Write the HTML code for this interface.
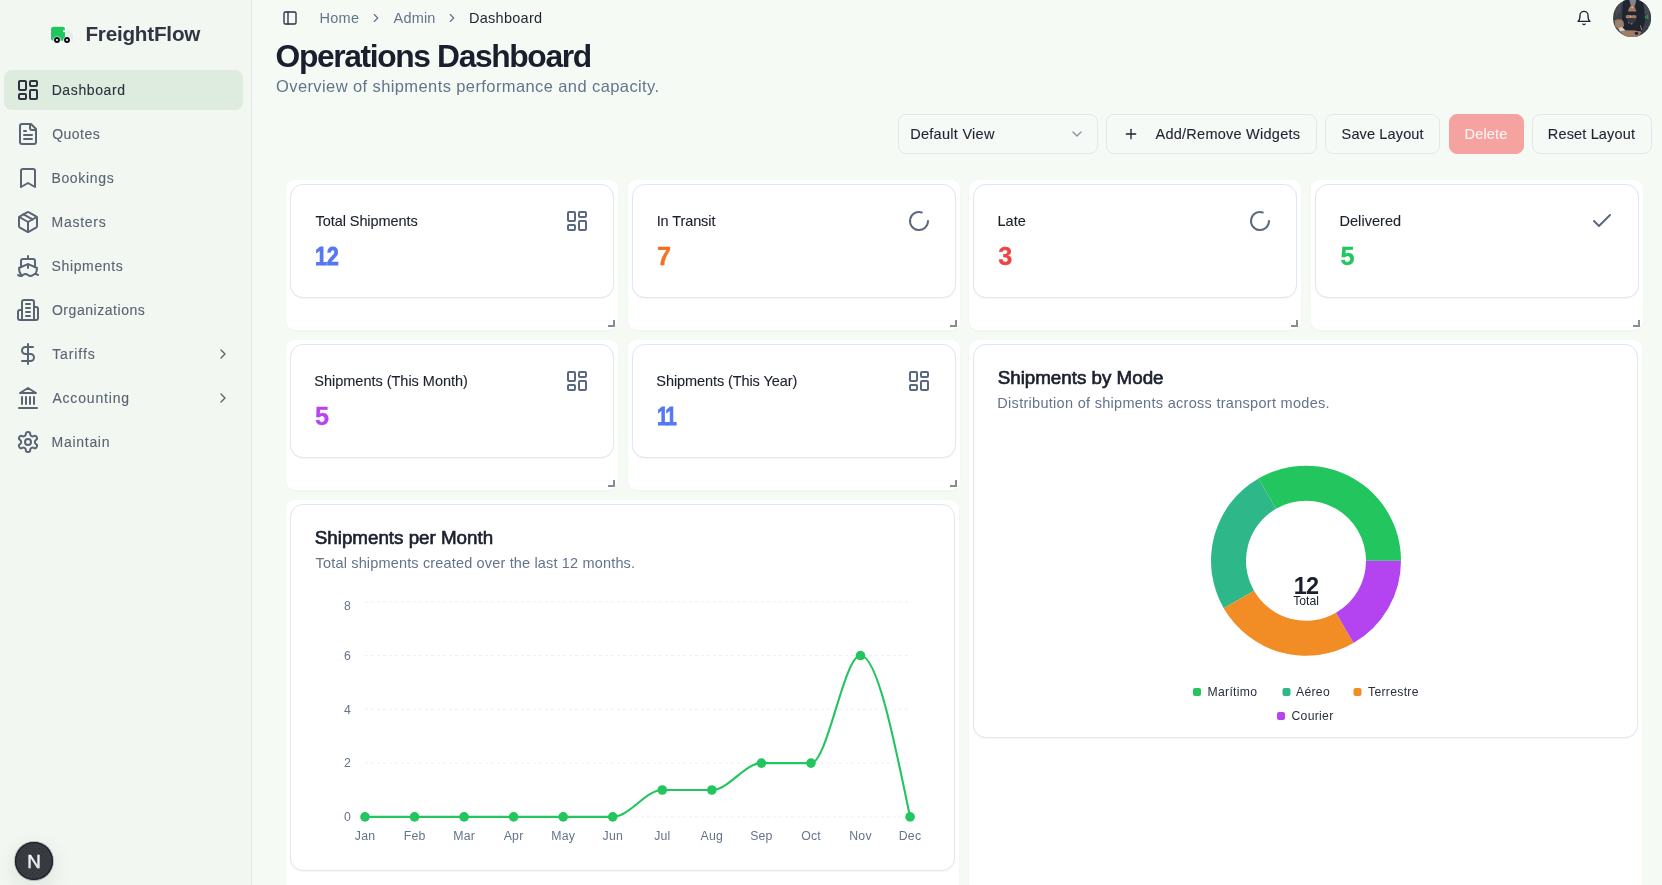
<!DOCTYPE html>
<html lang="en">
<head>
<meta charset="utf-8">
<title>FreightFlow - Operations Dashboard</title>
<style>
*{box-sizing:border-box;margin:0;padding:0}
html,body{width:1662px;height:885px;overflow:hidden}
body{background:#f5faf5;font-family:"Liberation Sans",sans-serif;color:#1a202c;position:relative;font-size:14px}
svg{display:block}
.abs{position:absolute}
#sidebar,#main{will-change:transform}
#main{position:absolute;left:0;top:0;width:1662px;height:885px}
.ico{fill:none;stroke:currentColor;stroke-width:2;stroke-linecap:round;stroke-linejoin:round}
/* sidebar */
#sidebar{position:absolute;left:0;top:0;width:252px;height:885px;background:#f2f7f2;border-right:1px solid #e3e7f0;z-index:2}
#brand{position:absolute;left:86px;top:21px;font-size:20.7px;font-weight:700;color:#2f3642;line-height:26px;white-space:nowrap;letter-spacing:0.1px}
.nav{position:absolute;left:4px;width:239px;height:40px;border-radius:8px;color:#5b6472}
.nav.active{background:#ddecdf;color:#2c333f}
.nav svg.ni{position:absolute;left:12px;top:8px;width:24px;height:24px}
.nav span{position:absolute;left:48.5px;top:0;line-height:40px;font-size:14px;white-space:nowrap;letter-spacing:0.5px;-webkit-text-stroke:0.12px currentColor}
.nav svg.chev{position:absolute;left:211px;top:12px;width:16px;height:16px}
/* header */
.crumb{position:absolute;top:8px;line-height:20px;font-size:14.5px;color:#64748b;white-space:nowrap;letter-spacing:0.3px}
#title{position:absolute;left:275px;top:38px;font-size:31.8px;line-height:36px;font-weight:700;color:#1a1f2e;white-space:nowrap;letter-spacing:-1.4px}
#subtitle{position:absolute;left:276px;top:74px;font-size:16.5px;line-height:24px;color:#64748b;white-space:nowrap;letter-spacing:0.4px}
/* toolbar */
.btn{position:absolute;top:114px;height:40px;border:1px solid #e2e6ef;border-radius:8px;background:#f6faf6;color:#1f2430;font-size:14.5px;line-height:38px;white-space:nowrap;letter-spacing:0.35px;-webkit-text-stroke:0.12px currentColor}
.btn span{position:absolute;top:0}
#m1{letter-spacing:-0.30px;margin-left:0.90px;transform:scaleX(.86);transform-origin:0 0;-webkit-text-stroke:0.8px currentColor}
#m6{letter-spacing:-2.60px;margin-left:1.00px;transform:scaleX(.82);transform-origin:0 0;-webkit-text-stroke:0.8px currentColor}
#m2{letter-spacing:0.00px;margin-left:0.92px}
#m3{letter-spacing:0.00px;margin-left:1.32px}
#m4{letter-spacing:0.00px;margin-left:1.40px}
#m5{letter-spacing:0.00px;margin-left:1.12px}
/* grid */
.cell{position:absolute;background:#fff;border-radius:9px;box-shadow:0 1px 2px rgba(30,50,30,.035)}
.cell:after{content:"";position:absolute;right:3px;bottom:3.5px;width:5.5px;height:5px;border-right:2px solid rgba(40,44,52,.55);border-bottom:2px solid rgba(40,44,52,.55)}
.card{position:absolute;left:4px;top:4px;right:4px;border:1px solid #e1e6ef;border-radius:13px;background:#fff;box-shadow:0 1px 2px rgba(15,23,42,.045)}
.stat .lbl{position:absolute;left:24px;top:26px;font-size:14.5px;line-height:20px;color:#1c212c;white-space:nowrap;letter-spacing:0.1px;-webkit-text-stroke:0.12px currentColor}
.stat .num{position:absolute;left:23px;top:55px;font-size:25.3px;line-height:32px;font-weight:700;white-space:nowrap;-webkit-text-stroke:0.3px currentColor}
.stat svg.si{position:absolute;right:24px;top:24px;width:24px;height:24px;color:#5b6980}
.ctitle{position:absolute;left:24px;top:22px;font-size:18.8px;line-height:24px;font-weight:400;-webkit-text-stroke:0.65px currentColor;color:#1a1f2e;white-space:nowrap;letter-spacing:-0.1px}
.csub{position:absolute;left:24px;top:49px;font-size:14.5px;line-height:20px;color:#64748b;white-space:nowrap;letter-spacing:0.4px}
</style>
<style id="fit">
#n1{letter-spacing:0.62px;margin-left:-0.89px}
#n2{letter-spacing:0.51px;margin-left:-0.39px}
#n3{letter-spacing:0.67px;margin-left:-1.14px}
#n4{letter-spacing:0.73px;margin-left:-0.93px}
#n5{letter-spacing:0.62px;margin-left:-0.91px}
#n6{letter-spacing:0.54px;margin-left:-0.59px}
#n7{letter-spacing:0.89px;margin-left:-0.28px}
#n8{letter-spacing:0.82px;margin-left:-0.11px}
#n9{letter-spacing:0.71px;margin-left:-0.92px}
#brand{letter-spacing:-0.22px;margin-left:-0.62px}
#c1{letter-spacing:0.31px;margin-left:-0.62px}
#c2{letter-spacing:0.18px;margin-left:0.04px}
#c3{letter-spacing:0.28px;margin-left:-0.56px}
#title{letter-spacing:-1.38px;margin-left:0.59px}
#subtitle{letter-spacing:0.40px;margin-left:0.00px}
#b0{letter-spacing:0.28px;margin-left:-0.84px}
#b1{letter-spacing:0.25px;margin-left:0.53px}
#b2{letter-spacing:0.14px;margin-left:-0.42px}
#b3{letter-spacing:0.16px;margin-left:-0.45px}
#b4{letter-spacing:0.15px;margin-left:-1.18px}
#s1{letter-spacing:-0.08px;margin-left:0.62px}
#s2{letter-spacing:-0.10px;margin-left:-0.34px}
#s3{letter-spacing:0.08px;margin-left:-0.54px}
#s4{letter-spacing:0.05px;margin-left:-0.54px}
#s5{letter-spacing:-0.02px;margin-left:-0.65px}
#s6{letter-spacing:-0.09px;margin-left:-0.65px}
#pt{letter-spacing:-0.01px;margin-left:0.69px}
#ps{letter-spacing:0.29px;margin-left:0.32px}
#lt{letter-spacing:-0.01px;margin-left:0.79px}
#ls{letter-spacing:0.16px;margin-left:1.62px}
</style>
</head>
<body>
<!-- SIDEBAR -->
<div id="sidebar">
  <svg class="abs" style="left:48px;top:20px" width="28" height="28" viewBox="48 20 28 28">
    <rect x="50" y="25.8" width="16" height="16" rx="3" fill="#fafdfb"/>
    <path d="M65 30h4.2l4 5v6.2H65z" fill="#e8edea"/>
    <rect x="51" y="26.8" width="14" height="14" rx="2.4" fill="#22c55e"/>
    <rect x="63.2" y="30.2" width="2.4" height="1.9" fill="#fafdfb"/>
    <circle cx="57" cy="40" r="3.6" fill="#fafdfb"/><circle cx="67" cy="40" r="3.6" fill="#fafdfb"/>
    <circle cx="57" cy="40" r="2" fill="#fff" stroke="#0b0a17" stroke-width="1.9"/>
    <circle cx="67" cy="40" r="2" fill="#fff" stroke="#0b0a17" stroke-width="1.9"/>
  </svg>
  <div id="brand">FreightFlow</div>
  <div class="nav active" style="top:70px"><svg class="ni ico" viewBox="0 0 24 24"><rect width="7" height="9" x="3" y="3" rx="1"/><rect width="7" height="5" x="14" y="3" rx="1"/><rect width="7" height="9" x="14" y="12" rx="1"/><rect width="7" height="5" x="3" y="16" rx="1"/></svg><span id="n1">Dashboard</span></div>
  <div class="nav" style="top:114px"><svg class="ni ico" viewBox="0 0 24 24"><path d="M15 2H6a2 2 0 0 0-2 2v16a2 2 0 0 0 2 2h12a2 2 0 0 0 2-2V7Z"/><path d="M14 2v4a2 2 0 0 0 2 2h4"/><path d="M10 9H8"/><path d="M16 13H8"/><path d="M16 17H8"/></svg><span id="n2">Quotes</span></div>
  <div class="nav" style="top:158px"><svg class="ni ico" viewBox="0 0 24 24"><path d="m19 21-7-4-7 4V5a2 2 0 0 1 2-2h10a2 2 0 0 1 2 2v16z"/></svg><span id="n3">Bookings</span></div>
  <div class="nav" style="top:202px"><svg class="ni ico" viewBox="0 0 24 24"><path d="m7.5 4.27 9 5.15"/><path d="M21 8a2 2 0 0 0-1-1.730l-7-4a2 2 0 0 0-2 0l-7 4A2 2 0 0 0 3 8v8a2 2 0 0 0 1 1.730l7 4a2 2 0 0 0 2 0l7-4A2 2 0 0 0 21 16Z"/><path d="m3.300 7 8.700 5 8.700-5"/><path d="M12 22V12"/></svg><span id="n4">Masters</span></div>
  <div class="nav" style="top:246px"><svg class="ni ico" viewBox="0 0 24 24"><path d="M12 10.189V14"/><path d="M12 2v3"/><path d="M19 13V7a2 2 0 0 0-2-2H7a2 2 0 0 0-2 2v6"/><path d="M19.380 20A11.600 11.600 0 0 0 21 14l-8.188-3.639a2 2 0 0 0-1.624 0L3 14a11.600 11.600 0 0 0 2.810 7.760"/><path d="M2 21c.6.500 1.200 1 2.500 1 2.500 0 2.500-2 5-2 1.300 0 1.900.500 2.500 1s1.200 1 2.500 1c2.500 0 2.500-2 5-2 1.300 0 1.900.500 2.500 1"/></svg><span id="n5">Shipments</span></div>
  <div class="nav" style="top:290px"><svg class="ni ico" viewBox="0 0 24 24"><path d="M6 22V4a2 2 0 0 1 2-2h8a2 2 0 0 1 2 2v18Z"/><path d="M6 12H4a2 2 0 0 0-2 2v6a2 2 0 0 0 2 2h2"/><path d="M18 9h2a2 2 0 0 1 2 2v9a2 2 0 0 1-2 2h-2"/><path d="M10 6h4"/><path d="M10 10h4"/><path d="M10 14h4"/><path d="M10 18h4"/></svg><span id="n6">Organizations</span></div>
  <div class="nav" style="top:334px"><svg class="ni ico" viewBox="0 0 24 24"><line x1="12" x2="12" y1="2" y2="22"/><path d="M17 5H9.500a3.500 3.500 0 0 0 0 7h5a3.500 3.500 0 0 1 0 7H6"/></svg><span id="n7">Tariffs</span><svg class="chev ico" viewBox="0 0 24 24"><path d="m9 18 6-6-6-6"/></svg></div>
  <div class="nav" style="top:378px"><svg class="ni ico" viewBox="0 0 24 24"><line x1="3" x2="21" y1="22" y2="22"/><line x1="6" x2="6" y1="18" y2="11"/><line x1="10" x2="10" y1="18" y2="11"/><line x1="14" x2="14" y1="18" y2="11"/><line x1="18" x2="18" y1="18" y2="11"/><polygon points="12 2 20 7 4 7"/></svg><span id="n8">Accounting</span><svg class="chev ico" viewBox="0 0 24 24"><path d="m9 18 6-6-6-6"/></svg></div>
  <div class="nav" style="top:422px"><svg class="ni ico" viewBox="0 0 24 24"><path d="M12.220 2h-.44a2 2 0 0 0-2 2v.180a2 2 0 0 1-1 1.730l-.43.250a2 2 0 0 1-2 0l-.15-.080a2 2 0 0 0-2.730.730l-.22.380a2 2 0 0 0 .73 2.730l.15.100a2 2 0 0 1 1 1.720v.510a2 2 0 0 1-1 1.740l-.15.090a2 2 0 0 0-.73 2.730l.22.380a2 2 0 0 0 2.730.730l.15-.080a2 2 0 0 1 2 0l.43.250a2 2 0 0 1 1 1.730V20a2 2 0 0 0 2 2h.44a2 2 0 0 0 2-2v-.180a2 2 0 0 1 1-1.730l.43-.250a2 2 0 0 1 2 0l.15.080a2 2 0 0 0 2.730-.730l.22-.39a2 2 0 0 0-.73-2.730l-.15-.080a2 2 0 0 1-1-1.740v-.500a2 2 0 0 1 1-1.740l.15-.090a2 2 0 0 0 .73-2.730l-.22-.380a2 2 0 0 0-2.730-.730l-.15.080a2 2 0 0 1-2 0l-.43-.250a2 2 0 0 1-1-1.730V4a2 2 0 0 0-2-2z"/><circle cx="12" cy="12" r="3"/></svg><span id="n9">Maintain</span></div>
  <!-- next dev badge -->
  <div class="abs" style="left:15px;top:842px;width:38px;height:38px;border-radius:50%;background:#3b3e44;box-shadow:0 0 0 1.2px #202227 inset,0 0 0 1px rgba(125,130,140,.5),0 6px 22px rgba(20,30,20,.10);overflow:hidden">
    <div class="abs" style="left:0;top:0;width:38px;height:38px;background-image:radial-gradient(circle,#25272c 0.6px,transparent 1px),radial-gradient(circle,#25272c 0.6px,transparent 1px);background-size:4.4px 4.4px;background-position:0 0,2.2px 2.2px;opacity:.8"></div>
    <svg class="abs" style="left:0;top:0" width="38" height="38" viewBox="0 0 38 38"><defs><linearGradient id="ng" x1="0" y1="0" x2="0" y2="1"><stop offset="0" stop-color="#fff"/><stop offset=".55" stop-color="#fff" stop-opacity=".9"/><stop offset="1" stop-color="#fff" stop-opacity=".75"/></linearGradient></defs><text x="19" y="25.800" text-anchor="middle" font-size="18.800" fill="url(#ng)" stroke="#fff" stroke-width=".45" stroke-opacity=".9">N</text></svg>
  </div>
</div>
<!-- MAIN placeholder -->
<div id="main">
  <svg class="abs ico" style="left:282px;top:10px;width:16px;height:16px;color:#2a3140" viewBox="0 0 24 24"><rect width="18" height="18" x="3" y="3" rx="2"/><path d="M9 3v18"/></svg>
  <div class="crumb" id="c1" style="left:320px">Home</div>
  <svg class="abs ico" style="left:369px;top:11px;width:14px;height:14px;color:#64748b" viewBox="0 0 24 24"><path d="m9 18 6-6-6-6"/></svg>
  <div class="crumb" id="c2" style="left:393.5px">Admin</div>
  <svg class="abs ico" style="left:445px;top:11px;width:14px;height:14px;color:#64748b" viewBox="0 0 24 24"><path d="m9 18 6-6-6-6"/></svg>
  <div class="crumb" id="c3" style="left:469.5px;color:#1e2430">Dashboard</div>
  <!-- bell -->
  <svg class="abs ico" style="left:1576px;top:10px;width:16px;height:16px;color:#1d2330" viewBox="0 0 24 24"><path d="M6 8a6 6 0 0 1 12 0c0 7 3 9 3 9H3s3-2 3-9"/><path d="M10.300 21a1.940 1.940 0 0 0 3.400 0"/></svg>
  <!-- avatar -->
  <svg class="abs" style="left:1612.9px;top:-1.4px" width="38.2" height="38.2" viewBox="0 0 38.2 38.2">
    <defs><clipPath id="av"><circle cx="19.1" cy="19.1" r="19.1"/></clipPath></defs>
    <g clip-path="url(#av)">
      <rect width="38.2" height="38.2" fill="#3a4048"/>
      <path d="M2 8l6-6v10l-5 6zM31 2l5 7v12l-4-2z" fill="#454b53"/>
      <path d="M10 0h19.500l1.500 9 1.200 13-3.500 10.600H9.500L9 21z" fill="#1e2430"/>
      <path d="M16 0h7.500l-1.500 6.500-2.500 2-2-3z" fill="#7d858f"/>
      <path d="M19.300 4l1.600 2 1.200 3 1.400 3.600h-8.600l1-3.400 1.600-2.200z" fill="#a07c62"/>
      <circle cx="19.300" cy="8.200" r="1" fill="#f0a0a6"/>
      <path d="M12.800 16.400l3.400-.6 1.400 1 3-.8 2.800.6v2.600l-2 .4-3.600-.6-3.200.8-1.800-1z" fill="#a07c62"/>
      <rect x="17.100" y="16.300" width="1.100" height="2.200" fill="#f0a0a6"/>
      <path d="M13.800 19.800l4.600-.8 5 .8-1.600 4-3 1.600-3.200-1.200z" fill="#333a43"/>
      <rect x="15" y="23.300" width="1.200" height="1" fill="#a07c62"/><rect x="17.500" y="24.300" width="2" height="1" fill="#a07c62"/>
      <path d="M1.600 21.600l3-1.400 4 .2 2 2.400.4 4-1.600 2.400-4.600.6-2.600-2.800z" fill="#a07c62"/>
      <g fill="#8d98a4"><circle cx="4.500" cy="24.200" r=".5"/><circle cx="6.400" cy="23.200" r=".5"/><circle cx="7.500" cy="24.400" r=".5"/><circle cx="5.400" cy="26.200" r=".5"/></g>
      <path d="M5.200 28.800l4-.6 3.200 3-1.200 1.800-4.400-.6z" fill="#cfd3d6"/>
      <rect x="7" y="29" width="1.200" height="2.600" fill="#f2c4b0"/>
      <path d="M7 32.600l5.500-1.400 9.500.4 6.500 1.200-3 5.400H12z" fill="#a07c62"/>
      <path d="M21.500 33.600l3-.8 1 2.600-3 .6z" fill="#1e2430"/>
      <path d="M26.900 26.300l1 .2 1.400 4.600-1 .2z" fill="#a07c62"/>
      <circle cx="32.500" cy="17.900" r=".75" fill="#22c55e"/><circle cx="34.600" cy="16.900" r=".7" fill="#22c55e"/><circle cx="34.600" cy="18.900" r=".7" fill="#22c55e"/><circle cx="35.600" cy="27.800" r=".6" fill="#22c55e"/>
    </g>
  </svg>
  <div id="title">Operations Dashboard</div>
  <div id="subtitle">Overview of shipments performance and capacity.</div>
  <!-- toolbar -->
  <div class="btn" style="left:898px;width:200px"><span id="b0" style="left:12px">Default View</span><svg class="abs ico" style="left:170px;top:11px;width:16px;height:16px;color:#8b93a1" viewBox="0 0 24 24"><path d="m6 9 6 6 6-6"/></svg></div>
  <div class="btn" style="left:1106px;width:211px"><svg class="abs ico" style="left:16px;top:11px;width:16px;height:16px" viewBox="0 0 24 24"><path d="M5 12h14"/><path d="M12 5v14"/></svg><span id="b1" style="left:48px">Add/Remove Widgets</span></div>
  <div class="btn" style="left:1325px;width:115px"><span id="b2" style="left:16px">Save Layout</span></div>
  <div class="btn" style="left:1449px;width:75px;background:#f5a3a1;border-color:#f5a3a1;color:#fdf3f1"><span id="b3" style="left:15px">Delete</span></div>
  <div class="btn" style="left:1532px;width:120px"><span id="b4" style="left:16px">Reset Layout</span></div>
  <div class="cell" style="left:286px;top:180px;width:332px;height:150px"><div class="card stat" style="height:114px"><div class="lbl" id="s1">Total Shipments</div><div class="num" id="m1" style="color:#5578f0">12</div><svg class="si ico" viewBox="0 0 24 24"><rect width="7" height="9" x="3" y="3" rx="1"/><rect width="7" height="5" x="14" y="3" rx="1"/><rect width="7" height="9" x="14" y="12" rx="1"/><rect width="7" height="5" x="3" y="16" rx="1"/></svg></div></div>
  <div class="cell" style="left:628px;top:180px;width:332px;height:150px"><div class="card stat" style="height:114px"><div class="lbl" id="s2">In Transit</div><div class="num" id="m2" style="color:#f4711f">7</div><svg class="si ico" viewBox="0 0 24 24"><path d="M21 12a9 9 0 1 1-6.219-8.560"/></svg></div></div>
  <div class="cell" style="left:969px;top:180px;width:332px;height:150px"><div class="card stat" style="height:114px"><div class="lbl" id="s3">Late</div><div class="num" id="m3" style="color:#ee4444">3</div><svg class="si ico" viewBox="0 0 24 24"><path d="M21 12a9 9 0 1 1-6.219-8.560"/></svg></div></div>
  <div class="cell" style="left:1311px;top:180px;width:332px;height:150px"><div class="card stat" style="height:114px"><div class="lbl" id="s4">Delivered</div><div class="num" id="m4" style="color:#22c55e">5</div><svg class="si ico" viewBox="0 0 24 24"><path d="M20 6 9 17l-5-5"/></svg></div></div>
  <div class="cell" style="left:286px;top:340px;width:332px;height:150px"><div class="card stat" style="height:114px"><div class="lbl" id="s5">Shipments (This Month)</div><div class="num" id="m5" style="color:#b744f0">5</div><svg class="si ico" viewBox="0 0 24 24"><rect width="7" height="9" x="3" y="3" rx="1"/><rect width="7" height="5" x="14" y="3" rx="1"/><rect width="7" height="9" x="14" y="12" rx="1"/><rect width="7" height="5" x="3" y="16" rx="1"/></svg></div></div>
  <div class="cell" style="left:628px;top:340px;width:332px;height:150px"><div class="card stat" style="height:114px"><div class="lbl" id="s6">Shipments (This Year)</div><div class="num" id="m6" style="color:#5578f0">11</div><svg class="si ico" viewBox="0 0 24 24"><rect width="7" height="9" x="3" y="3" rx="1"/><rect width="7" height="5" x="14" y="3" rx="1"/><rect width="7" height="9" x="14" y="12" rx="1"/><rect width="7" height="5" x="3" y="16" rx="1"/></svg></div></div>
  <!--PIE-->
  <div class="cell" style="left:969px;top:340px;width:673px;height:560px"><div class="card" style="height:394px"></div>
    <div class="ctitle" id="pt" style="left:28px;top:26px">Shipments by Mode</div>
    <div class="csub" id="ps" style="left:28px;top:53px">Distribution of shipments across transport modes.</div>
    <svg class="abs" style="left:0;top:0" width="674" height="420" viewBox="0 0 674 420">
      <path d="M432.00 220.70A95 95 0 0 0 289.50 138.43L307.00 168.74A60 60 0 0 1 397.00 220.70Z" fill="#22c55e"/><path d="M289.50 138.43A95 95 0 0 0 254.73 268.20L285.04 250.70A60 60 0 0 1 307.00 168.74Z" fill="#2eb88a"/><path d="M254.73 268.20A95 95 0 0 0 384.50 302.97L367.00 272.66A60 60 0 0 1 285.04 250.70Z" fill="#f28c24"/><path d="M384.50 302.97A95 95 0 0 0 432.00 220.70L397.00 220.70A60 60 0 0 1 367.00 272.66Z" fill="#b444f0"/>
      <text id="pn" x="337" y="254.1" text-anchor="middle" font-size="23.5" font-weight="700" fill="#1a1f2e" letter-spacing="-0.8">12</text>
      <text id="pl" x="337" y="265" text-anchor="middle" font-size="12.2" fill="#1a1f2e">Total</text>
      <g font-size="12.2" fill="#2a303c" letter-spacing="0.3">
        <rect x="224" y="348" width="8" height="8" rx="2" fill="#22c55e"/><text id="l1" x="238.5" y="356.300">Marítimo</text>
        <rect x="313.5" y="348" width="8" height="8" rx="2" fill="#2eb88a"/><text id="l2" x="327" y="356.300">Aéreo</text>
        <rect x="384.5" y="348" width="8" height="8" rx="2" fill="#f28c24"/><text id="l3" x="399" y="356.300">Terrestre</text>
        <rect x="308" y="372" width="8" height="8" rx="2" fill="#b444f0"/><text id="l4" x="322.5" y="380.300">Courier</text>
      </g>
    </svg>
  </div>
  <!--/PIE-->
  <!--LINE-->
  <div class="cell" style="left:286px;top:500px;width:673px;height:400px"><div class="card" style="height:367px"></div>
    <div class="ctitle" id="lt" style="left:28px;top:26px">Shipments per Month</div>
    <div class="csub" id="ls" style="left:28px;top:53px">Total shipments created over the last 12 months.</div>
    <svg class="abs" style="left:0;top:0" width="674" height="385" viewBox="0 0 674 385">
      <g stroke="#e6ebf0" stroke-width="1" stroke-dasharray="3 3" opacity=".8"><line x1="79.0" x2="624.0" y1="316.9" y2="316.9"/><line x1="79.0" x2="624.0" y1="263.1" y2="263.1"/><line x1="79.0" x2="624.0" y1="209.3" y2="209.3"/><line x1="79.0" x2="624.0" y1="155.6" y2="155.6"/><line x1="79.0" x2="624.0" y1="101.8" y2="101.8"/></g>
      <path d="M79.00,316.90C95.52,316.90,112.03,316.90,128.55,316.90C145.07,316.90,161.58,316.90,178.10,316.90C194.62,316.90,211.13,316.90,227.65,316.90C244.17,316.90,260.68,316.90,277.20,316.90C293.72,316.90,310.23,316.90,326.75,316.90C343.27,316.90,359.78,290.01,376.30,290.01C392.82,290.01,409.33,290.01,425.85,290.01C442.37,290.01,458.88,263.12,475.40,263.12C491.92,263.12,508.43,263.12,524.95,263.12C541.47,263.12,557.98,155.57,574.50,155.57C591.02,155.57,607.53,236.24,624.05,316.90" fill="none" stroke="#22c55e" stroke-width="2.1" stroke-linejoin="round"/>
      <g fill="#22c55e"><circle cx="79.00" cy="316.90" r="4.8"/><circle cx="128.55" cy="316.90" r="4.8"/><circle cx="178.10" cy="316.90" r="4.8"/><circle cx="227.65" cy="316.90" r="4.8"/><circle cx="277.20" cy="316.90" r="4.8"/><circle cx="326.75" cy="316.90" r="4.8"/><circle cx="376.30" cy="290.01" r="4.8"/><circle cx="425.85" cy="290.01" r="4.8"/><circle cx="475.40" cy="263.12" r="4.8"/><circle cx="524.95" cy="263.12" r="4.8"/><circle cx="574.50" cy="155.57" r="4.8"/><circle cx="624.05" cy="316.90" r="4.8"/></g>
      <g font-size="12.3" fill="#64748b" letter-spacing="0.2"><text x="79.0" y="339.7" text-anchor="middle">Jan</text><text x="128.6" y="339.7" text-anchor="middle">Feb</text><text x="178.1" y="339.7" text-anchor="middle">Mar</text><text x="227.6" y="339.7" text-anchor="middle">Apr</text><text x="277.2" y="339.7" text-anchor="middle">May</text><text x="326.8" y="339.7" text-anchor="middle">Jun</text><text x="376.3" y="339.7" text-anchor="middle">Jul</text><text x="425.8" y="339.7" text-anchor="middle">Aug</text><text x="475.4" y="339.7" text-anchor="middle">Sep</text><text x="525.0" y="339.7" text-anchor="middle">Oct</text><text x="574.5" y="339.7" text-anchor="middle">Nov</text><text x="624.0" y="339.7" text-anchor="middle">Dec</text><text x="65" y="321.2" text-anchor="end">0</text><text x="65" y="267.4" text-anchor="end">2</text><text x="65" y="213.6" text-anchor="end">4</text><text x="65" y="159.9" text-anchor="end">6</text><text x="65" y="109.6" text-anchor="end">8</text></g>
    </svg>
  </div>
  <!--/LINE-->
</div>
</body>
</html>
